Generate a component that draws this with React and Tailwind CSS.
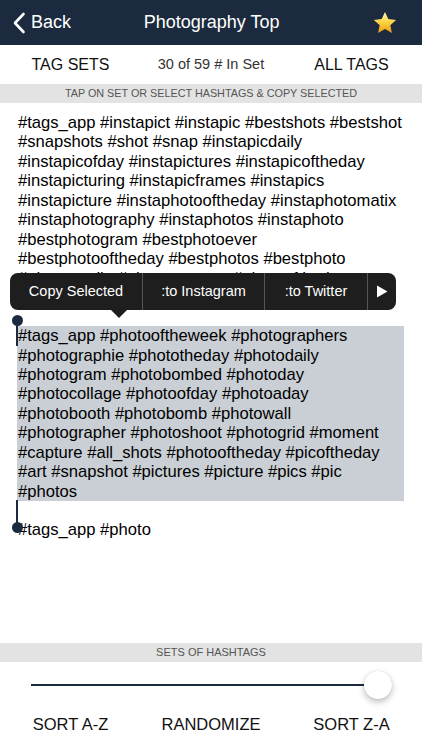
import React from "react";

const F = { fontFamily: '"Liberation Sans", Arial, sans-serif' };

function Star() {
  return (
    <svg width="26" height="26" viewBox="0 0 24 24">
      <defs>
        <linearGradient id="sg" x1="0" y1="0" x2="0" y2="1">
          <stop offset="0" stopColor="#fff7b0" />
          <stop offset="0.45" stopColor="#ffd84a" />
          <stop offset="1" stopColor="#e89a0c" />
        </linearGradient>
      </defs>
      <path
        d="M12 1.8l3.05 6.6 7.2.8-5.35 4.9 1.5 7.1L12 17.6l-6.4 3.6 1.5-7.1L1.75 9.2l7.2-.8z"
        fill="url(#sg)"
      />
    </svg>
  );
}

export default function App() {
  const top = [
    "#tags_app #instapict #instapic #bestshots #bestshot",
    "#snapshots #shot #snap #instapicdaily",
    "#instapicofday #instapictures #instapicoftheday",
    "#instapicturing #instapicframes #instapics",
    "#instapicture #instaphotooftheday #instaphotomatix",
    "#instaphotography #instaphotos #instaphoto",
    "#bestphotogram #bestphotoever",
    "#bestphotooftheday #bestphotos #bestphoto",
  ];
  const sel = [
    "#tags_app #photooftheweek #photographers",
    "#photographie #phototheday #photodaily",
    "#photogram #photobombed #photoday",
    "#photocollage #photoofday #photoaday",
    "#photobooth #photobomb #photowall",
    "#photographer #photoshoot #photogrid #moment",
    "#capture #all_shots #photooftheday #picoftheday",
    "#art #snapshot #pictures #picture #pics #pic",
    "#photos",
  ];
  return (
    <div className="w-[422px] h-[750px] flex flex-col bg-white overflow-hidden" style={F}>
      {/* nav */}
      <div className="h-[45px] bg-[#1b2a3e] flex items-center relative shrink-0">
        <div className="flex items-center pl-[12px] text-white">
          <svg width="14" height="22" viewBox="0 0 14 22">
            <path d="M11.5 2L3 11l8.5 9" stroke="white" strokeWidth="2.6" fill="none" strokeLinecap="round" strokeLinejoin="round" />
          </svg>
          <span className="text-[18px] ml-[5px]">Back</span>
        </div>
        <div className="flex-1 text-center text-white text-[18px] pr-[20px]">Photography Top</div>
        <div className="pr-[24px] flex items-center">
          <Star />
        </div>
      </div>
      {/* toolbar */}
      <div className="h-[39px] flex items-center shrink-0 text-[#111]">
        <div className="w-[141px] text-center text-[16px]">TAG SETS</div>
        <div className="flex-1 text-center text-[14.5px] text-[#333]">30 of 59 # In Set</div>
        <div className="w-[141px] text-center text-[16px]">ALL TAGS</div>
      </div>
      <div className="h-[19px] bg-[#e3e3e3] flex items-center justify-center text-[10.8px] text-[#555] shrink-0">
        TAP ON SET OR SELECT HASHTAGS &amp; COPY SELECTED
      </div>
      {/* text area */}
      <div className="flex-1 relative pt-[10px] text-[16.6px] leading-[19.45px] text-black">
        <div className="pl-[18px]">
          {top.map((l, i) => (
            <div key={i} className="whitespace-nowrap">{l}</div>
          ))}
          <div className="h-[19.45px]">
            <div className="h-[6px] overflow-hidden whitespace-nowrap">#photostudio #photostagram #photooftheday</div>
          </div>
        </div>
        <div className="h-[38px]" />
        <div className="ml-[17px] w-[387px] bg-[#c9cfd4] pl-[1px]">
          {sel.map((l, i) => (
            <div key={i} className="whitespace-nowrap">{l}</div>
          ))}
        </div>
        <div className="h-[19px]" />
        <div className="pl-[18px]">#tags_app #photo</div>

        {/* popup */}
        <div className="absolute left-[10px] top-[170px] w-[386px] h-[37px] rounded-[8px] bg-[#1e1e1e] flex items-center text-white text-[14.5px]">
          <div className="w-[132px] text-center">Copy Selected</div>
          <div className="w-px h-full bg-[#555]" />
          <div className="w-[121px] text-center">:to Instagram</div>
          <div className="w-px h-full bg-[#555]" />
          <div className="w-[102px] text-center">:to Twitter</div>
          <div className="w-px h-full bg-[#555]" />
          <div className="flex-1 flex justify-center">
            <svg width="12" height="13" viewBox="0 0 12 13"><path d="M1 0.5L11.5 6.5 1 12.5z" fill="white" /></svg>
          </div>
          <div className="absolute left-[100px] top-[36px] w-0 h-0 border-l-[9px] border-r-[9px] border-t-[9px] border-l-transparent border-r-transparent border-t-[#1e1e1e]" />
        </div>
        {/* handles */}
        <div className="absolute left-[12px] top-[212px] w-[11px] h-[11px] rounded-full bg-[#1b2a3e]" />
        <div className="absolute left-[16px] top-[218px] w-[2px] h-[25px] bg-[#1b2a3e]" />
        <div className="absolute left-[16px] top-[397px] w-[2px] h-[26px] bg-[#1b2a3e]" />
        <div className="absolute left-[12px] top-[419px] w-[11px] h-[11px] rounded-full bg-[#1b2a3e]" />
      </div>
      <div className="h-[19px] bg-[#e3e3e3] flex items-center justify-center text-[11px] text-[#555] shrink-0">
        SETS OF HASHTAGS
      </div>
      {/* slider */}
      <div className="h-[46px] flex items-center pl-[31px] pr-[30px] shrink-0">
        <div className="flex-1 h-[2px] bg-[#1b2a3e]" />
        <div className="w-[28px] h-[28px] rounded-full bg-white shadow-[0_3px_6px_rgba(0,0,0,0.25),0_0_1px_rgba(0,0,0,0.2)] -ml-[8px]" />
      </div>
      <div className="h-[35px] pt-[4px] flex items-start text-[16.5px] text-[#111] shrink-0">
        <div className="w-[141px] text-center">SORT A-Z</div>
        <div className="flex-1 text-center">RANDOMIZE</div>
        <div className="w-[141px] text-center">SORT Z-A</div>
      </div>
      <div className="h-[7px] shrink-0" />
    </div>
  );
}
